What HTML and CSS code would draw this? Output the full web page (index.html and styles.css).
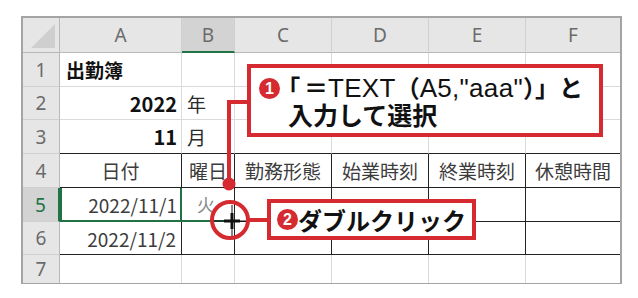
FILE: index.html
```html
<!DOCTYPE html>
<html lang="ja">
<head>
<meta charset="utf-8">
<link rel="stylesheet" href="styles.css">
</head>
<body>
<div class="stage">
  <div class="sheet">
    <div class="hd corner"></div>
    <div class="hd col">A</div>
    <div class="hd col sel">B</div>
    <div class="hd col">C</div>
    <div class="hd col">D</div>
    <div class="hd col">E</div>
    <div class="hd col last">F</div>

    <div class="hd row">1</div>
    <div class="c left bold title">出勤簿</div>
    <div class="c"></div><div class="c"></div><div class="c"></div><div class="c"></div><div class="c last"></div>

    <div class="hd row">2</div>
    <div class="c right bold num">2022</div>
    <div class="c left">年</div>
    <div class="c"></div><div class="c"></div><div class="c"></div><div class="c last"></div>

    <div class="hd row">3</div>
    <div class="c right bold num bb">11</div>
    <div class="c left bb">月</div>
    <div class="c bb"></div><div class="c bb"></div><div class="c bb"></div><div class="c bb last"></div>

    <div class="hd row">4</div>
    <div class="c t center">日付</div>
    <div class="c t center">曜日</div>
    <div class="c t center">勤務形態</div>
    <div class="c t center">始業時刻</div>
    <div class="c t center">終業時刻</div>
    <div class="c t center last">休憩時間</div>

    <div class="hd row sel">5</div>
    <div class="c t right ref">2022/11/1</div>
    <div class="c t center active"><span class="faint">火</span></div>
    <div class="c t"></div><div class="c t"></div><div class="c t"></div><div class="c t last"></div>

    <div class="hd row">6</div>
    <div class="c t right">2022/11/2</div>
    <div class="c t"></div><div class="c t"></div><div class="c t"></div><div class="c t"></div><div class="c t last"></div>

    <div class="hd row end">7</div>
    <div class="c end"></div><div class="c end"></div><div class="c end"></div><div class="c end"></div><div class="c end"></div><div class="c end last"></div>
  </div>

  <svg class="marks" width="638" height="298" viewBox="0 0 638 298">
    <polyline points="249,102 229,102 229,184" fill="none" stroke="#d42a30" stroke-width="4"/>
    <circle cx="229" cy="184" r="6.5" fill="#d42a30"/>
    <line x1="214" y1="221" x2="248" y2="221" stroke="#111" stroke-width="1"/>
    <line x1="232" y1="205" x2="232" y2="238" stroke="#111" stroke-width="1"/>
    <line x1="224" y1="221" x2="240" y2="221" stroke="#111" stroke-width="3"/>
    <line x1="232" y1="213" x2="232" y2="229" stroke="#111" stroke-width="3"/>
    <circle cx="230" cy="220" r="18" fill="none" stroke="#d42a30" stroke-width="4"/>
    <line x1="248" y1="220" x2="269" y2="220" stroke="#d42a30" stroke-width="4"/>
  </svg>

  <div class="callout one">
    <span class="badge">1</span>
    <div class="ctext">
      <div class="l1"><span class="open">「</span>＝<span class="lat">TEXT</span>（<span class="lat">A5,"aaa"</span>）」と</div>
      <div class="l2">入力して選択</div>
    </div>
  </div>

  <div class="callout two">
    <span class="badge">2</span>
    <div class="ctext">ダブルクリック</div>
  </div>
</div>
</body>
</html>
```

FILE: styles.css
```css
* { box-sizing: border-box; }
html, body { margin: 0; padding: 0; background: #fff; }
body {
  font-family: "Noto Sans CJK JP", "Noto Sans", sans-serif;
  width: 638px;
  height: 298px;
  overflow: hidden;
}
.stage {
  position: relative;
  width: 638px;
  height: 298px;
  padding: 16px 0 0 21px;
}
.sheet {
  display: grid;
  grid-template-columns: 37px 122px 53px 97px 97px 97px 94px;
  grid-template-rows: 35px 34px 33px 34px 34px 34px 33px 28px;
  border: 2px solid #a4a4a4;
  border-bottom-width: 1px;
  width: fit-content;
}
.hd {
  background: #e6e6e6;
  color: #6b6b6b;
  font-family: "Noto Sans", "Liberation Sans", sans-serif;
  font-size: 19px;
  display: flex;
  align-items: center;
  justify-content: center;
}
.hd.col {
  border-right: 1px solid #d0d0d0;
  border-bottom: 1px solid #b8b8b8;
}
.hd.col.last { border-right: none; }
.hd.col.sel {
  background: #d3d3d3;
  border-bottom: 2px solid #217346;
}
.hd.row {
  border-bottom: 1px solid #d0d0d0;
  border-right: 1px solid #b8b8b8;
}
.hd.row.sel {
  background: #d3d3d3;
  color: #217346;
  border-right: 2px solid #217346;
}
.hd.row.end { border-bottom: none; }
.corner {
  position: relative;
  border-right: 1px solid #b8b8b8;
  border-bottom: 1px solid #b8b8b8;
}
.corner::after {
  content: "";
  position: absolute;
  right: 4px;
  bottom: 4px;
  width: 24px;
  height: 24px;
  background: #cfcfcf;
  clip-path: polygon(100% 0, 100% 100%, 0 100%);
}
.c {
  background: #fff;
  border-right: 1px solid #dadada;
  border-bottom: 1px solid #dadada;
  font-size: 19px;
  color: #2a2a2a;
  display: flex;
  align-items: center;
  white-space: nowrap;
  padding: 0 5px;
}
.c.last { border-right: none; }
.c.end { border-bottom: none; }
.c.bb { border-bottom-color: #222; }
.c.t {
  border-right-color: #222;
  border-bottom-color: #222;
  color: #3c3c3c;
}
.c.t.last { border-right: none; }
.left { justify-content: flex-start; }
.right { justify-content: flex-end; }
.center { justify-content: center; padding: 0; }
.bold { font-weight: 700; color: #111; }
.title { font-size: 19px; padding-left: 6px; }
.num { font-size: 20px; padding-right: 4px; }
.c.ref {
  border-bottom: 2px solid #217346;
  border-right: 2px solid #217346;
  box-shadow: inset 2px 0 0 #217346;
  padding-right: 3px;
}
.c.active {
  border-bottom: 2px solid #217346;
  justify-content: center;
}
.faint { color: #8a8a8a; font-size: 18px; margin-left: -4px; }

.marks {
  position: absolute;
  left: 0;
  top: 0;
}
.callout {
  position: absolute;
  background: #fff;
  border: 4px solid #d42a30;
  display: flex;
  align-items: flex-start;
  font-weight: 700;
  color: #111;
}
.callout.one {
  left: 247px;
  top: 64px;
  width: 356px;
  height: 73px;
  padding: 4px 0 0 8px;
  font-size: 24px;
  line-height: 29px;
}
.callout.two {
  left: 267px;
  top: 199px;
  width: 209px;
  height: 41px;
  padding: 0 0 0 6px;
  align-items: center;
  font-size: 24px;
  line-height: 30px;
}
.badge {
  flex: none;
  width: 21px;
  height: 21px;
  border-radius: 50%;
  background: #d42a30;
  color: #fff;
  font-family: "Liberation Sans", sans-serif;
  font-weight: 700;
  font-size: 16px;
  line-height: 21px;
  text-align: center;
  margin-top: 6px;
  margin-right: 8px;
}
.callout.two .badge { margin-top: 0; margin-right: 0; }
.ctext { white-space: nowrap; }
.l1 { height: 29px; }
.l2 { font-size: 25px; line-height: 27px; }
.open { font-feature-settings: "palt"; margin-right: 4px; }
.lat {
  font-family: "Liberation Sans", sans-serif;
  font-weight: 400;
  font-size: 26px;
  letter-spacing: 0.3px;
  line-height: 26px;
}
```
